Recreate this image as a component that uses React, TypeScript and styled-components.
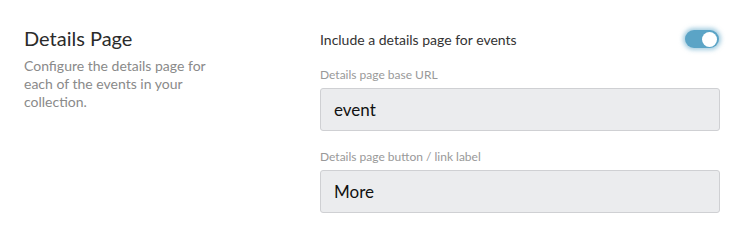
import React, { useState } from 'react';
import styled, { createGlobalStyle } from 'styled-components';

const GlobalStyle = createGlobalStyle`
  body {
    margin: 0;
    background: #ffffff;
    font-family: Lato, "Open Sans", sans-serif;
  }
`;

const Section = styled.section`
  display: flex;
  padding: 26px 36px 0 24px;
`;

const Intro = styled.div`
  width: 296px;
  flex-shrink: 0;
`;

const Title = styled.h2`
  margin: 0;
  font-size: 20px;
  line-height: 24px;
  font-weight: 400;
  color: #2b2b2b;
`;

const Description = styled.p`
  margin: 7px 0 0;
  width: 190px;
  font-size: 14px;
  line-height: 18px;
  color: #8a8a8a;
`;

const Fields = styled.div`
  flex: 1;
  display: flex;
  flex-direction: column;
`;

const ToggleRow = styled.div`
  display: flex;
  justify-content: space-between;
  align-items: center;
  height: 26px;
`;

const ToggleLabel = styled.span`
  font-size: 14px;
  color: #333333;
`;

const Switch = styled.button<{ $on: boolean }>`
  position: relative;
  width: 34px;
  height: 18px;
  margin-right: 1px;
  padding: 0;
  border: none;
  border-radius: 9px;
  background: ${p => (p.$on ? '#5ba4c6' : '#cfd2d6')};
  box-shadow: ${p => (p.$on ? '0 0 4px 2px rgba(91, 164, 198, 0.55)' : 'none')};
  cursor: pointer;

  &::after {
    content: '';
    position: absolute;
    top: 1.5px;
    left: ${p => (p.$on ? '17px' : '2px')};
    width: 15px;
    height: 15px;
    border-radius: 50%;
    background: #ffffff;
  }
`;

const Field = styled.label`
  display: flex;
  flex-direction: column;
  margin-top: 15px;

  & + & {
    margin-top: 18px;
  }
`;

const FieldLabel = styled.span`
  font-size: 12px;
  line-height: 16px;
  color: #999999;
  margin-bottom: 5px;
`;

const Input = styled.input`
  box-sizing: border-box;
  width: 400px;
  height: 43px;
  padding: 0 13px;
  border: 1px solid #cfd0d3;
  border-radius: 3px;
  background: #ebecee;
  font-family: Lato, "Open Sans", sans-serif;
  font-size: 17px;
  color: #111111;
  outline: none;
`;

export default function App() {
  const [enabled, setEnabled] = useState(true);
  const [baseUrl, setBaseUrl] = useState('event');
  const [linkLabel, setLinkLabel] = useState('More');

  return (
    <>
      <GlobalStyle />
      <Section>
        <Intro>
          <Title>Details Page</Title>
          <Description>
            Configure the details page for each of the events in your collection.
          </Description>
        </Intro>
        <Fields>
          <ToggleRow>
            <ToggleLabel>Include a details page for events</ToggleLabel>
            <Switch $on={enabled} onClick={() => setEnabled(!enabled)} aria-label="Include a details page" />
          </ToggleRow>
          <Field>
            <FieldLabel>Details page base URL</FieldLabel>
            <Input value={baseUrl} onChange={e => setBaseUrl(e.target.value)} />
          </Field>
          <Field>
            <FieldLabel>Details page button / link label</FieldLabel>
            <Input value={linkLabel} onChange={e => setLinkLabel(e.target.value)} />
          </Field>
        </Fields>
      </Section>
    </>
  );
}
